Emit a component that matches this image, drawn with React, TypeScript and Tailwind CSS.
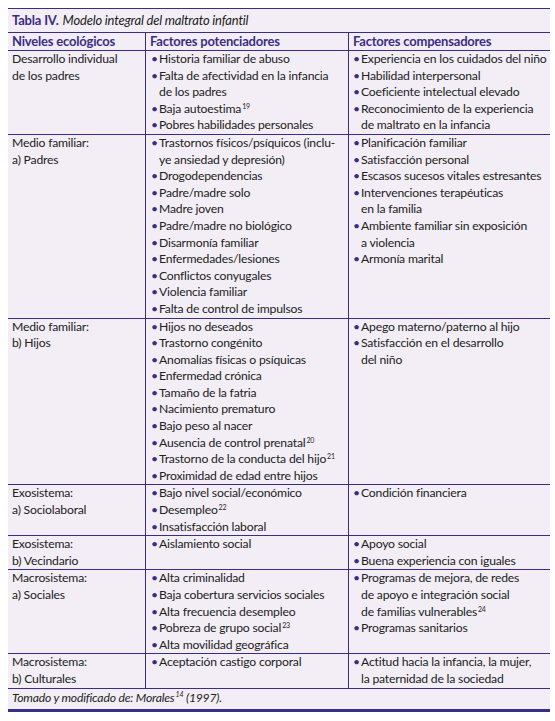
import React from "react";

type Line = React.ReactNode;

interface Row {
  level: Line[];
  risk: Line[][];
  comp: Line[][];
}

function Sup({ n }: { n: string }) {
  return <sup className="relative -top-[4px] ml-[1px] text-[7px] leading-none">{n}</sup>;
}

const rows: Row[] = [
  {
    level: ["Desarrollo individual", "de los padres"],
    risk: [
      ["Historia familiar de abuso"],
      ["Falta de afectividad en la infancia", "de los padres"],
      [<>Baja autoestima<Sup n="19" /></>],
      ["Pobres habilidades personales"],
    ],
    comp: [
      ["Experiencia en los cuidados del niño"],
      ["Habilidad interpersonal"],
      ["Coeficiente intelectual elevado"],
      ["Reconocimiento de la experiencia", "de maltrato en la infancia"],
    ],
  },
  {
    level: ["Medio familiar:", "a) Padres"],
    risk: [
      ["Trastornos físicos/psíquicos (inclu-", "ye ansiedad y depresión)"],
      ["Drogodependencias"],
      ["Padre/madre solo"],
      ["Madre joven"],
      ["Padre/madre no biológico"],
      ["Disarmonía familiar"],
      ["Enfermedades/lesiones"],
      ["Conflictos conyugales"],
      ["Violencia familiar"],
      ["Falta de control de impulsos"],
    ],
    comp: [
      ["Planificación familiar"],
      ["Satisfacción personal"],
      ["Escasos sucesos vitales estresantes"],
      ["Intervenciones terapéuticas", "en la familia"],
      ["Ambiente familiar sin exposición", "a violencia"],
      ["Armonía marital"],
    ],
  },
  {
    level: ["Medio familiar:", "b) Hijos"],
    risk: [
      ["Hijos no deseados"],
      ["Trastorno congénito"],
      ["Anomalías físicas o psíquicas"],
      ["Enfermedad crónica"],
      ["Tamaño de la fatria"],
      ["Nacimiento prematuro"],
      ["Bajo peso al nacer"],
      [<>Ausencia de control prenatal<Sup n="20" /></>],
      [<>Trastorno de la conducta del hijo<Sup n="21" /></>],
      ["Proximidad de edad entre hijos"],
    ],
    comp: [
      ["Apego materno/paterno al hijo"],
      ["Satisfacción en el desarrollo", "del niño"],
    ],
  },
  {
    level: ["Exosistema:", "a) Sociolaboral"],
    risk: [
      ["Bajo nivel social/económico"],
      [<>Desempleo<Sup n="22" /></>],
      ["Insatisfacción laboral"],
    ],
    comp: [["Condición financiera"]],
  },
  {
    level: ["Exosistema:", "b) Vecindario"],
    risk: [["Aislamiento social"]],
    comp: [["Apoyo social"], ["Buena experiencia con iguales"]],
  },
  {
    level: ["Macrosistema:", "a) Sociales"],
    risk: [
      ["Alta criminalidad"],
      ["Baja cobertura servicios sociales"],
      ["Alta frecuencia desempleo"],
      [<>Pobreza de grupo social<Sup n="23" /></>],
      ["Alta movilidad geográfica"],
    ],
    comp: [
      [
        "Programas de mejora, de redes",
        "de apoyo e integración social",
        <>de familias vulnerables<Sup n="24" /></>,
      ],
      ["Programas sanitarios"],
    ],
  },
  {
    level: ["Macrosistema:", "b) Culturales"],
    risk: [["Aceptación castigo corporal"]],
    comp: [["Actitud hacia la infancia, la mujer,", "la paternidad de la sociedad"]],
  },
];

function BulletList({ items }: { items: Line[][] }) {
  return (
    <div className="flex flex-col">
      {items.map((lines, i) => (
        <div key={i} className="flex">
          <span className="w-[8px] shrink-0 text-[#3a2d86]">•</span>
          <div className="flex flex-col">
            {lines.map((l, j) => (
              <span key={j} className="whitespace-nowrap">
                {l}
              </span>
            ))}
          </div>
        </div>
      ))}
    </div>
  );
}

export default function App() {
  return (
    <div className="min-h-[721px] w-[555px] bg-white pt-2 font-['Lato',sans-serif] text-[12.2px] tracking-[-0.2px] text-[#222]">
      <div className="ml-2 w-[542px] bg-[#f3eef6]">
        {/* Title */}
        <div className="flex h-6 items-center border-t border-[#3a2d86] px-1 text-[13px]">
          <span className="font-bold text-[#3a2d86]">Tabla IV.</span>
          <span className="ml-1 italic">Modelo integral del maltrato infantil</span>
        </div>

        {/* Header */}
        <div className="grid h-[18px] grid-cols-[137px_203px_202px] border-t border-[#3a2d86] text-[13px] font-bold leading-[17px] text-[#3a2d86]">
          <div className="px-1">Niveles ecológicos</div>
          <div className="border-l border-[#3a2d86] px-1">Factores potenciadores</div>
          <div className="border-l border-[#3a2d86] px-1">Factores compensadores</div>
        </div>

        {/* Body */}
        {rows.map((row, i) => (
          <div
            key={i}
            className="grid grid-cols-[137px_203px_202px] border-t border-[#3a2d86] leading-[16.6px]"
          >
            <div className="flex flex-col px-1">
              {row.level.map((l, j) => (
                <span key={j}>{l}</span>
              ))}
            </div>
            <div className="border-l border-[#3a2d86] pl-[5px]">
              <BulletList items={row.risk} />
            </div>
            <div className="border-l border-[#3a2d86] pl-[4px]">
              <BulletList items={row.comp} />
            </div>
          </div>
        ))}

        {/* Footer */}
        <div className="flex h-[24px] items-center border-t border-b-[3px] border-[#3a2d86] px-1 italic">
          Tomado y modificado de: Morales<Sup n="14" />&nbsp;(1997).
        </div>
      </div>
    </div>
  );
}
